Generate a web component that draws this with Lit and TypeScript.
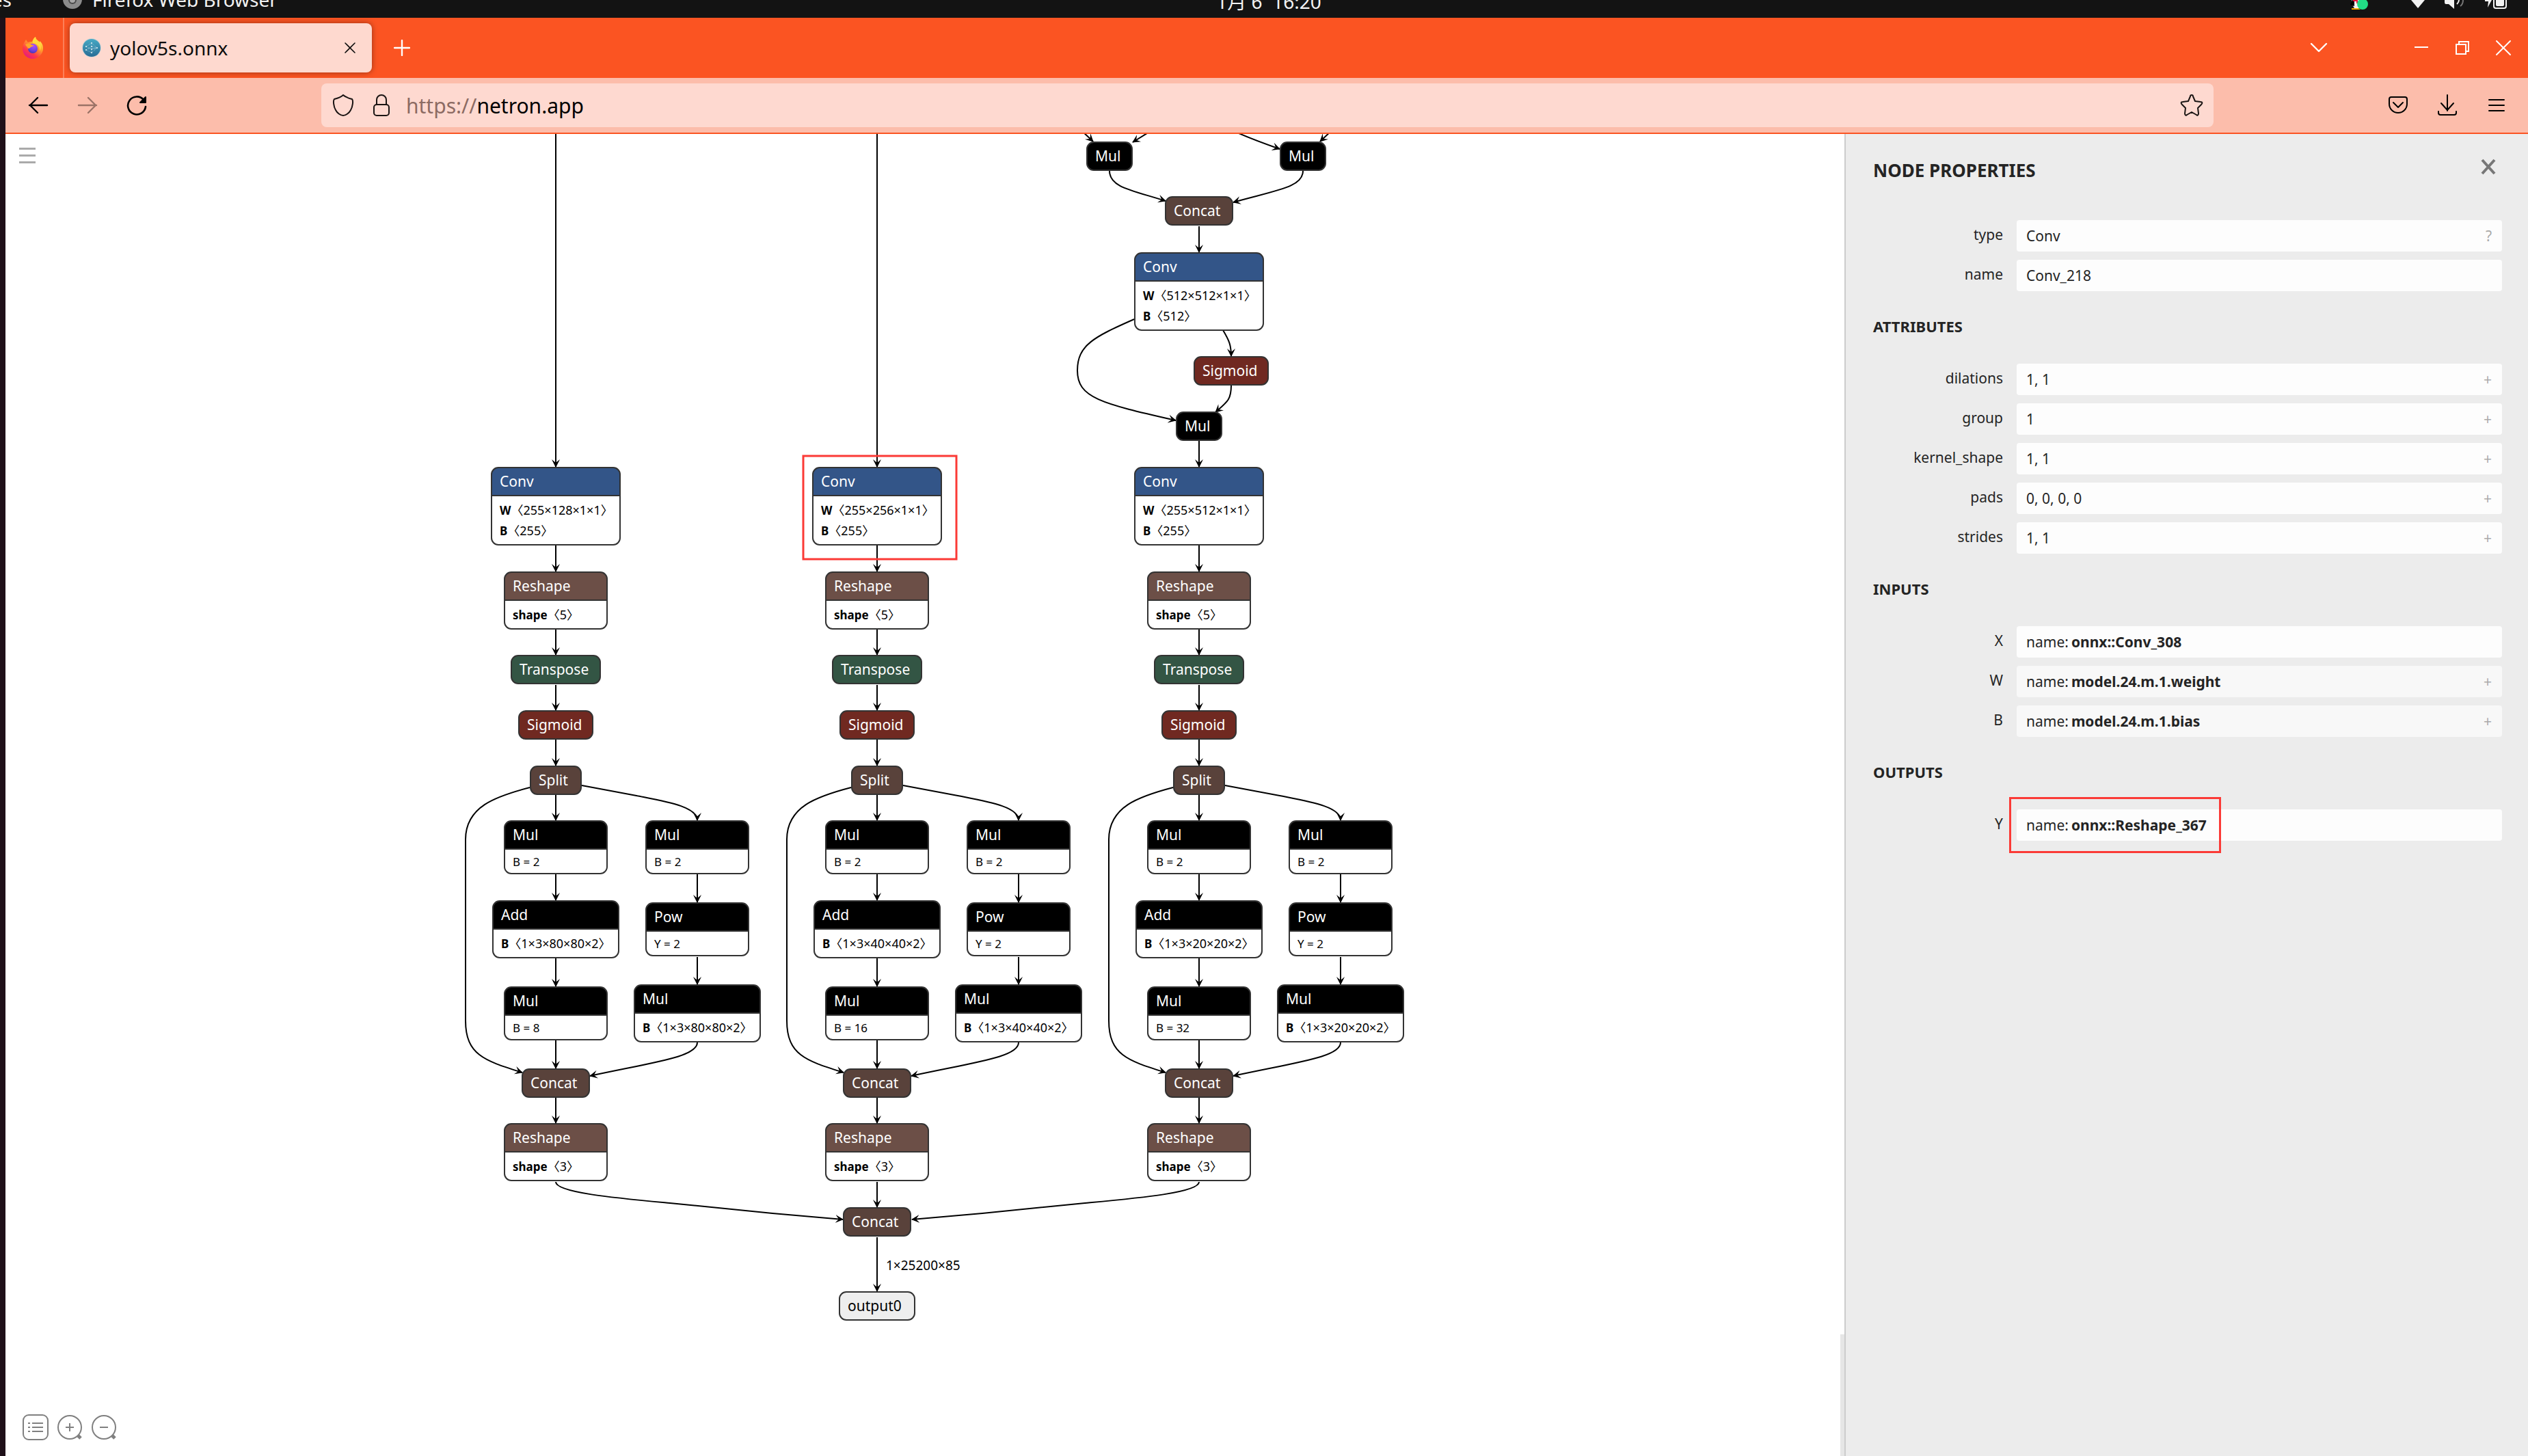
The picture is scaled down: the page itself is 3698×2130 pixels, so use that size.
import { LitElement, html, svg, css, nothing } from "lit";
import { customElement, property } from "lit/decorators.js";

/* ---------- graph data ---------- */

type Tone = "op" | "conv" | "shape" | "transform" | "activation" | "tensor" | "output";

interface Row {
  name: string;
  value: string;
  plain?: boolean;
}

interface GraphNode {
  label: string;
  tone: Tone;
  cx: number;
  y: number;
  w: number;
  rows?: Row[];
}

const tensor = (name: string, dims: string): Row => ({ name, value: `\u3008${dims}\u3009` });
const scalar = (name: string, value: string): Row => ({ name, value, plain: true });

/** One detection head: Conv down to the last Reshape of a column. */
function head(cx: number, channels: number, grid: number, stride: number): GraphNode[] {
  const cell = `1×3×${grid}×${grid}×2`;
  const right = cx + 207;
  return [
    { label: "Conv", tone: "conv", cx, y: 684, w: 188, rows: [tensor("W", `255×${channels}×1×1`), tensor("B", "255")] },
    { label: "Reshape", tone: "shape", cx, y: 837, w: 150, rows: [tensor("shape", "5")] },
    { label: "Transpose", tone: "transform", cx, y: 959, w: 130 },
    { label: "Sigmoid", tone: "activation", cx, y: 1040, w: 108 },
    { label: "Split", tone: "tensor", cx, y: 1121, w: 74 },
    { label: "Mul", tone: "op", cx, y: 1201, w: 150, rows: [scalar("B", "2")] },
    { label: "Add", tone: "op", cx, y: 1318, w: 184, rows: [tensor("B", cell)] },
    { label: "Mul", tone: "op", cx, y: 1444, w: 150, rows: [scalar("B", String(stride))] },
    { label: "Mul", tone: "op", cx: right, y: 1201, w: 150, rows: [scalar("B", "2")] },
    { label: "Pow", tone: "op", cx: right, y: 1321, w: 150, rows: [scalar("Y", "2")] },
    { label: "Mul", tone: "op", cx: right, y: 1441, w: 184, rows: [tensor("B", cell)] },
    { label: "Concat", tone: "tensor", cx, y: 1564, w: 98 },
    { label: "Reshape", tone: "shape", cx, y: 1644, w: 150, rows: [tensor("shape", "3")] },
  ];
}

const COLUMNS = [813, 1283, 1754];

const NODES: GraphNode[] = [
  { label: "Mul", tone: "op", cx: 1623, y: 208, w: 66 },
  { label: "Mul", tone: "op", cx: 1906, y: 208, w: 66 },
  { label: "Concat", tone: "tensor", cx: 1754, y: 288, w: 98 },
  { label: "Conv", tone: "conv", cx: 1754, y: 370, w: 188, rows: [tensor("W", "512×512×1×1"), tensor("B", "512")] },
  { label: "Sigmoid", tone: "activation", cx: 1801, y: 522, w: 108 },
  { label: "Mul", tone: "op", cx: 1754, y: 603, w: 66 },
  ...head(COLUMNS[0], 128, 80, 8),
  ...head(COLUMNS[1], 256, 40, 16),
  ...head(COLUMNS[2], 512, 20, 32),
  { label: "Concat", tone: "tensor", cx: 1283, y: 1767, w: 98 },
  { label: "output0", tone: "output", cx: 1283, y: 1890, w: 110 },
];

function columnEdges(cx: number): string[] {
  const r = cx + 207;
  return [
    `M${cx} 797V836`,
    `M${cx} 920V958`,
    `M${cx} 1002V1039`,
    `M${cx} 1082V1120`,
    `M${cx} 1163V1200`,
    `M${cx} 1279V1317`,
    `M${cx} 1402V1443`,
    `M${cx} 1522V1563`,
    `M${cx} 1606V1643`,
    `M${r} 1279V1320`,
    `M${r} 1400V1440`,
    `M${cx + 38} 1149L${cx + 118} 1164C${cx + 163} 1173 ${r} 1180 ${r} 1200`,
    `M${r} 1525C${r} 1546 ${cx + 148} 1553 ${cx + 50} 1574`,
    `M${cx - 38} 1152C${cx - 88} 1165 ${cx - 132} 1180 ${cx - 132} 1228V1493C${cx - 132} 1544 ${cx - 103} 1552 ${cx - 49} 1569`,
  ];
}

const EDGES: string[] = [
  "M813 190V683",
  "M1283 190V683",
  "M1754 331V369",
  "M1754 645V683",
  "M1581 190L1599 207",
  "M1686 190L1657 208",
  "M1801 190C1820 199 1838 206 1872 218",
  "M1949 190L1931 207",
  "M1623 250C1623 274 1655 278 1705 294",
  "M1906 250C1906 274 1868 278 1804 296",
  "M1789 483C1798 498 1801 505 1801 521",
  "M1801 564C1801 585 1795 588 1778 603",
  "M1659 467C1600 493 1576 505 1576 542C1576 582 1610 590 1720 615",
  ...COLUMNS.flatMap(columnEdges),
  "M813 1729C813 1745 905 1753 980 1760L1130 1775L1233 1784",
  "M1754 1729C1754 1745 1662 1753 1587 1760L1437 1775L1334 1784",
  "M1283 1729V1766",
  "M1283 1810V1889",
];

const HEADER = 41;
const RADIUS = 10;

@customElement("model-graph")
export class ModelGraph extends LitElement {
  static styles = css`
    :host {
      display: block;
      width: 100%;
      height: 100%;
    }
    .graph {
      display: block;
      width: 100%;
      height: 100%;
      font-family: "Noto Sans", "Noto Sans CJK SC", sans-serif;
    }
    .edge {
      fill: none;
      stroke: #000;
      stroke-width: 2;
    }
    .outline {
      fill: none;
      stroke: #333;
      stroke-width: 2;
    }
    .body {
      fill: #fff;
    }
    .rule {
      stroke: #333;
      stroke-width: 2;
    }
    .title {
      font-size: 21px;
      fill: #fff;
    }
    .attr {
      font-size: 17px;
      fill: #000;
    }
    .attr-name {
      font-weight: 700;
    }
    .attr-dims {
      font-size: 18px;
    }
    .edge-label {
      font-size: 19px;
      fill: #000;
    }
    .op {
      fill: #000;
    }
    .conv {
      fill: #335588;
    }
    .shape {
      fill: #6c4f47;
    }
    .transform {
      fill: #335544;
    }
    .activation {
      fill: #702921;
    }
    .tensor {
      fill: #59423b;
    }
    .output {
      fill: #eee;
    }
    .title.on-light {
      fill: #000;
    }
    .highlight {
      fill: none;
      stroke: #fb3a36;
      stroke-width: 3;
    }
  `;

  private node(n: GraphNode) {
    const x = n.cx - n.w / 2;
    const right = x + n.w;
    const rows = n.rows ?? [];
    const bodyHeight = rows.length === 0 ? 0 : rows[0].plain ? 36 : 12 + rows.length * 30;
    const h = HEADER + bodyHeight;
    const top = `M${x} ${n.y + HEADER}V${n.y + RADIUS}a${RADIUS} ${RADIUS} 0 0 1 ${RADIUS} -${RADIUS}H${right - RADIUS}a${RADIUS} ${RADIUS} 0 0 1 ${RADIUS} ${RADIUS}V${n.y + HEADER}Z`;
    return svg`
      <g>
        ${rows.length
          ? svg`
              <rect class="body" x=${x} y=${n.y} width=${n.w} height=${h} rx=${RADIUS}></rect>
              <path class=${n.tone} d=${top}></path>
              <line class="rule" x1=${x} x2=${right} y1=${n.y + HEADER} y2=${n.y + HEADER}></line>`
          : svg`<rect class=${n.tone} x=${x} y=${n.y} width=${n.w} height=${h} rx=${RADIUS}></rect>`}
        <rect class="outline" x=${x} y=${n.y} width=${n.w} height=${h} rx=${RADIUS}></rect>
        <text class="title ${n.tone === "output" ? "on-light" : ""}" x=${x + 12} y=${n.y + 28}>${n.label}</text>
        ${rows.map((r, i) =>
          r.plain
            ? svg`<text class="attr" x=${x + 12} y=${n.y + HEADER + 25}>${r.name} = ${r.value}</text>`
            : svg`<text class="attr" x=${x + 12} y=${n.y + HEADER + 28 + i * 30}><tspan class="attr-name">${r.name}</tspan><tspan class="attr-dims">${r.value}</tspan></text>`
        )}
      </g>`;
  }

  render() {
    return html`
      <svg class="graph" viewBox="8 196 2690 1934" preserveAspectRatio="xMidYMin meet" role="img" aria-label="Model graph">
        <defs>
          <marker id="arrow" viewBox="0 0 12 12" refX="11" refY="6" markerWidth="12" markerHeight="12" markerUnits="userSpaceOnUse" orient="auto">
            <path d="M0 0L12 6L0 12L5 6Z"></path>
          </marker>
        </defs>
        ${EDGES.map((d) => svg`<path class="edge" d=${d} marker-end="url(#arrow)"></path>`)}
        ${NODES.map((n) => this.node(n))}
        <text class="edge-label" x="1296" y="1858">1×25200×85</text>
        <rect class="highlight" x="1175" y="667" width="224" height="151"></rect>
      </svg>`;
  }
}

/* ---------- properties sidebar ---------- */

interface Property {
  label: string;
  value: string;
  prefix?: string;
  action?: string;
  muted?: boolean;
  marked?: boolean;
}

interface Section {
  title?: string;
  items: Property[];
}

const SECTIONS: Section[] = [
  {
    items: [
      { label: "type", value: "Conv", action: "?" },
      { label: "name", value: "Conv_218" },
    ],
  },
  {
    title: "ATTRIBUTES",
    items: [
      { label: "dilations", value: "1, 1", action: "+" },
      { label: "group", value: "1", action: "+" },
      { label: "kernel_shape", value: "1, 1", action: "+" },
      { label: "pads", value: "0, 0, 0, 0", action: "+" },
      { label: "strides", value: "1, 1", action: "+" },
    ],
  },
  {
    title: "INPUTS",
    items: [
      { label: "X", prefix: "name:", value: "onnx::Conv_308" },
      { label: "W", prefix: "name:", value: "model.24.m.1.weight", action: "+", muted: true },
      { label: "B", prefix: "name:", value: "model.24.m.1.bias", action: "+", muted: true },
    ],
  },
  {
    title: "OUTPUTS",
    items: [{ label: "Y", prefix: "name:", value: "onnx::Reshape_367", marked: true }],
  },
];

@customElement("node-properties")
export class NodeProperties extends LitElement {
  @property({ attribute: false }) sections: Section[] = SECTIONS;

  static styles = css`
    :host {
      display: block;
      box-sizing: border-box;
      background: #ececec;
      border-left: 2px solid #ccc;
      padding: 36px 38px 0 40px;
      color: #242424;
      font: 21px/30px "Noto Sans", sans-serif;
    }
    .top {
      display: flex;
      justify-content: space-between;
      align-items: flex-start;
      margin-bottom: 56px;
    }
    .heading {
      margin: 0;
      font-size: 26px;
      line-height: 34px;
      font-weight: 700;
    }
    .subheading {
      margin: 36px 0 40px;
      font-size: 22px;
      line-height: 30px;
      font-weight: 700;
    }
    .close {
      display: flex;
      margin: 0 8px 0 0;
      padding: 0;
      border: 0;
      background: none;
    }
    .rows {
      display: grid;
      gap: 12px;
    }
    .row {
      display: grid;
      grid-template-columns: 190px 1fr;
      column-gap: 20px;
      height: 46px;
    }
    .label {
      text-align: right;
      line-height: 42px;
    }
    .box {
      position: relative;
      display: flex;
      align-items: center;
      gap: 4px;
      padding: 0 15px 0 14px;
      border-radius: 4px;
      background: #fdfdfd;
    }
    .box.muted {
      background: #f8f8f8;
    }
    .field {
      flex: 1;
      min-width: 0;
      height: 46px;
      padding: 0;
      border: 0;
      outline: 0;
      background: none;
      color: inherit;
      font: inherit;
    }
    .field.strong {
      font-weight: 700;
    }
    .action {
      padding: 0;
      border: 0;
      background: none;
      color: #aaa;
      font: inherit;
    }
    .mark {
      position: absolute;
      left: -11px;
      top: -18px;
      width: 310px;
      height: 82px;
      box-sizing: border-box;
      border: 3px solid #fb3a36;
    }
  `;

  private row(p: Property, id: string) {
    return html`
      <div class="row">
        <label class="label" for=${id}>${p.label}</label>
        <div class="box ${p.muted ? "muted" : ""}">
          ${p.prefix ? html`<span>${p.prefix}</span>` : nothing}
          <input class="field ${p.prefix ? "strong" : ""}" id=${id} readonly .value=${p.value} />
          ${p.action ? html`<button class="action" type="button">${p.action}</button>` : nothing}
          ${p.marked ? html`<div class="mark"></div>` : nothing}
        </div>
      </div>`;
  }

  render() {
    return html`
      <div class="top">
        <h1 class="heading">NODE PROPERTIES</h1>
        <button class="close" type="button" aria-label="Close">
          <svg width="24" height="24" viewBox="0 0 24 24" fill="none" stroke="#777" stroke-width="4">
            <path d="M3 2L21 22M21 2L3 22"></path>
          </svg>
        </button>
      </div>
      ${this.sections.map(
        (s, i) => html`
          ${s.title ? html`<h2 class="subheading">${s.title}</h2>` : nothing}
          <div class="rows">${s.items.map((p, j) => this.row(p, `p${i}-${j}`))}</div>
        `
      )}`;
  }
}

/* ---------- icons ---------- */

const firefox = html`
  <svg width="32" height="32" viewBox="0 0 32 32" aria-hidden="true">
    <defs>
      <linearGradient id="ff-body" x1="0.85" y1="0.1" x2="0.25" y2="1">
        <stop offset="0" stop-color="#fff44f"></stop>
        <stop offset="0.35" stop-color="#ffa02a"></stop>
        <stop offset="0.7" stop-color="#ff3b47"></stop>
        <stop offset="1" stop-color="#e31587"></stop>
      </linearGradient>
      <radialGradient id="ff-globe" cx="0.6" cy="0.2" r="0.9">
        <stop offset="0" stop-color="#b04bff"></stop>
        <stop offset="0.6" stop-color="#7043dd"></stop>
        <stop offset="1" stop-color="#3a2ea8"></stop>
      </radialGradient>
    </defs>
    <path fill="url(#ff-body)" d="M3 9C4 7 5 6 6 4C7 6 8 7 9 8C11 7 13 7 15 7C16 4 18 1 20 0C20 3 22 4 24 6C25 6 25 7 26 8V6C30 9 31 13 31 17C31 25 24 32 16 32C7 32 1 25 1 17C1 14 2 11 3 9Z"></path>
    <circle cx="16" cy="17" r="7" fill="url(#ff-globe)"></circle>
    <path fill="#ffa52c" d="M5 11C8 9 11 9 13 11C14 12 16 12 17 12C17 14 14 14 13 15C12 16 11 17 9 17C8 14 6 14 5 11Z"></path>
    <path fill="#ffd93b" d="M16 6C17 3 18 1 20 0C20 3 22 4 24 6C28 10 29 15 26 21C27 15 24 10 16 9Z"></path>
  </svg>`;

const favicon = html`
  <svg width="28" height="28" viewBox="0 0 28 28" aria-hidden="true">
    <defs>
      <linearGradient id="globe" x1="0" y1="0" x2="0" y2="1">
        <stop offset="0" stop-color="#46a9c4"></stop>
        <stop offset="1" stop-color="#286d96"></stop>
      </linearGradient>
    </defs>
    <circle cx="14" cy="14" r="14" fill="#d8d5d5"></circle>
    <circle cx="14" cy="14" r="13" fill="url(#globe)"></circle>
    <g stroke="#a9d0dc" stroke-dasharray="1 1" fill="none" opacity="0.8">
      <path d="M6 12L14 7L22 14L14 21L6 17L14 12L22 14L14 16L6 12M14 7V12M14 16V21M9 15H20"></path>
    </g>
    <g fill="#e2f1f5">
      <circle cx="14" cy="7" r="1"></circle>
      <circle cx="6" cy="12" r="1"></circle>
      <circle cx="6" cy="17" r="1"></circle>
      <circle cx="14" cy="12" r="1"></circle>
      <circle cx="14" cy="16" r="1"></circle>
      <circle cx="14" cy="21" r="1"></circle>
      <circle cx="22" cy="14" r="1"></circle>
    </g>
  </svg>`;

const icon = (size: number, body: unknown, width = 2) => html`
  <svg
    width=${size}
    height=${size}
    viewBox="0 0 ${size} ${size}"
    fill="none"
    stroke="currentColor"
    stroke-width=${width}
    stroke-linecap="round"
    stroke-linejoin="round"
    aria-hidden="true"
  >${body}</svg>`;

const ICONS = {
  close: icon(20, svg`<path stroke-width="1.6" d="M3 3L17 17M17 3L3 17"></path>`),
  plus: icon(24, svg`<path stroke-width="2.4" d="M12 1V23M1 12H23"></path>`, 3),
  chevron: icon(28, svg`<path stroke-width="2.4" d="M3 8L14 19L25 8"></path>`, 3),
  minimize: icon(24, svg`<path stroke-linecap="butt" d="M2 11H22"></path>`),
  restore: icon(24, svg`<path stroke-linejoin="miter" d="M3 7H17V21H3ZM7 7V3H21V17H17"></path>`),
  quit: icon(24, svg`<path d="M2 2L22 22M22 2L2 22"></path>`),
  back: icon(32, svg`<path stroke-width="2.4" d="M3 16H29M15 5L4 16L15 27"></path>`, 3),
  forward: icon(32, svg`<path stroke-width="2.4" d="M3 16H29M17 5L28 16L17 27"></path>`, 3),
  reload: icon(32, svg`<path stroke-width="2.6" d="M29 18A13 13 0 1 1 26 8"></path><path fill="currentColor" stroke-width="2" d="M29 4V12H21Z"></path>`, 3),
  shield: icon(36, svg`<path d="M18 3C21 6 27 8 31 9C33 11 32 20 29 25C27 29 22 33 18 33C14 33 9 29 7 25C4 20 3 11 5 9C9 8 15 6 18 3Z"></path>`),
  lock: icon(36, svg`<rect x="7" y="17" width="22" height="16" rx="4"></rect><path d="M11 17V10A7 7 0 0 1 25 10V17"></path>`, 2),
  star: icon(36, svg`<path d="M18 3C19 3 20 4 20 5L23 12L31 13C34 13 34 15 32 17L27 22L28 30C28 33 26 33 25 32L18 28L11 32C10 33 8 33 8 30L9 22L4 17C2 15 2 13 5 13L13 12L16 5C16 4 17 3 18 3Z"></path>`, 2),
  pocket: icon(32, svg`<path d="M6 4H26Q29 4 29 7V14A13 13 0 0 1 3 14V7Q3 4 6 4Z"></path><path d="M9 12L16 19L23 12"></path>`),
  download: icon(32, svg`<path d="M16 1V24M7 13L16 23L25 13M3 25V27Q3 30 6 30H26Q29 30 29 27V25"></path>`),
  menu: icon(32, svg`<path d="M5 8H27M5 16H27M5 24H27"></path>`, 2),
};

/* ---------- browser window ---------- */

@customElement("app-root")
export class AppRoot extends LitElement {
  static styles = css`
    :host {
      display: flex;
      flex-direction: column;
      height: 100vh;
      overflow: hidden;
      background: #131313;
      color: #000;
      font-family: "Noto Sans", "Noto Sans CJK SC", sans-serif;
    }
    button {
      display: flex;
      align-items: center;
      justify-content: center;
      padding: 0;
      border: 0;
      background: none;
      color: inherit;
      font: inherit;
    }

    .desktop-bar {
      flex: none;
      display: grid;
      grid-template-columns: 1fr auto 1fr;
      grid-template-rows: 26px;
      align-items: end;
      height: 26px;
      overflow: hidden;
      color: #f2f2f2;
      font-size: 28px;
      white-space: pre;
    }
    .apps {
      display: flex;
      align-items: flex-end;
      line-height: 54px;
      height: 54px;
    }
    .activities {
      width: 92px;
      box-sizing: border-box;
      padding-right: 75px;
      direction: rtl;
    }
    .app-name {
      padding-left: 15px;
    }
    .clock {
      height: 48px;
      padding-left: 14px;
      line-height: 48px;
    }
    .tray {
      display: flex;
      justify-content: flex-end;
      gap: 28px;
      padding-right: 30px;
    }
    .tray-app {
      margin-right: 34px;
    }

    /* window */
    .window {
      flex: 1;
      min-height: 0;
      display: flex;
      flex-direction: column;
      border-left: 8px solid #1f1019;
      background: #fff;
    }
    .tabs {
      flex: none;
      display: flex;
      align-items: center;
      height: 88px;
      padding-right: 6px;
      box-sizing: border-box;
      background: #fb5422;
      color: #fff;
    }
    .brand {
      display: flex;
      align-items: center;
      align-self: stretch;
      width: 86px;
      padding-left: 24px;
      box-sizing: border-box;
      border-right: 2px solid #fc8058;
    }
    .tab {
      display: flex;
      align-items: center;
      gap: 13px;
      width: 442px;
      height: 72px;
      margin-left: 8px;
      padding: 0 12px 0 18px;
      box-sizing: border-box;
      border-radius: 8px;
      background: #fed9cf;
      box-shadow: 0 0 8px rgba(0, 0, 0, 0.4);
      color: #0c0c0c;
      font-size: 28px;
    }
    .tab-title {
      flex: 1;
    }
    .tab-close {
      width: 40px;
      height: 40px;
    }
    .new-tab {
      width: 56px;
      height: 56px;
      margin-left: 16px;
    }
    .tab-list {
      width: 60px;
      height: 60px;
      margin-left: auto;
      margin-right: 90px;
    }
    .window-button {
      width: 60px;
      height: 60px;
    }
    .nav {
      flex: none;
      display: flex;
      align-items: center;
      height: 80px;
      padding: 0 10px 0 12px;
      border-bottom: 2px solid #fb5422;
      background: #fcbdab;
    }
    .nav-button {
      width: 72px;
      height: 64px;
    }
    .disabled {
      color: #9b7367;
    }
    .address {
      flex: 1;
      display: flex;
      align-items: center;
      height: 64px;
      margin: 0 234px;
      padding: 0 4px;
      border-radius: 8px;
      background: #fed9d0;
      font-size: 30px;
    }
    .address-button {
      width: 56px;
      height: 56px;
      color: #1a1413;
    }
    .scheme {
      margin-left: 8px;
      color: #8c6b63;
    }
    .url {
      flex: 1;
      min-width: 0;
      padding: 0;
      border: 0;
      outline: 0;
      background: none;
      color: #000;
      font: inherit;
    }

    /* page */
    .page {
      flex: 1;
      min-height: 0;
      display: flex;
    }
    .canvas {
      position: relative;
      flex: 1;
      min-width: 0;
      overflow: hidden;
    }
    .page-menu {
      position: absolute;
      left: 20px;
      top: 18px;
    }
    .zoom-tools {
      position: absolute;
      left: 24px;
      bottom: 21px;
      display: flex;
      gap: 10px;
      color: #808080;
    }
    .scroll-thumb {
      position: absolute;
      right: 0;
      bottom: 0;
      width: 6px;
      height: 178px;
      background: #e6e6e6;
    }
    .sidebar {
      flex: 0 0 1000px;
    }
  `;

  render() {
    return html`
      <header class="desktop-bar">
        <div class="apps">
          <span class="activities">es</span>
          <svg width="28" height="26" viewBox="0 0 28 26" aria-hidden="true">
            <circle cx="14" cy="-1" r="14" fill="#8c8c8c"></circle>
            <circle cx="14" cy="0" r="6" fill="#4a4a4a"></circle>
            <circle cx="14" cy="0" r="4" fill="#a8a8a8"></circle>
          </svg>
          <span class="app-name">Firefox Web Browser</span>
        </div>
        <time class="clock">1月 6  16:20</time>
        <div class="tray">
          <svg class="tray-app" width="26" height="26" viewBox="0 0 26 26" aria-hidden="true">
            <path d="M2 0H14V12H6C3 8 2 4 2 0Z" fill="#f2f2f2"></path>
            <path d="M0 7L3 0H6V9Z" fill="#000"></path>
            <path d="M4 0H11V5H9V2H4Z" fill="#e6143c"></path>
            <path d="M2 12H12L15 14H2Z" fill="#f0a800"></path>
            <circle cx="18" cy="6" r="8" fill="#22dc86"></circle>
          </svg>
          <svg width="22" height="26" viewBox="0 0 22 26" aria-hidden="true">
            <path d="M1 0H21L11 12Z" fill="#f2f2f2"></path>
          </svg>
          <svg width="30" height="26" viewBox="0 0 30 26" aria-hidden="true">
            <path d="M0 0H14V13L6 6H2Q0 6 0 3Z" fill="#f2f2f2"></path>
            <path d="M21 0Q21 3 18 6" fill="none" stroke="#f2f2f2" stroke-width="2"></path>
            <path d="M27 0Q27 6 23 9" fill="none" stroke="#777" stroke-width="2"></path>
          </svg>
          <svg width="34" height="26" viewBox="0 0 34 26" aria-hidden="true">
            <path d="M1 0H11L5 11L6 2H1Z" fill="#f2f2f2"></path>
            <path d="M14 -4V9Q14 12 17 12H29Q32 12 32 9V-4" fill="none" stroke="#f2f2f2" stroke-width="2"></path>
            <rect x="17" y="-4" width="12" height="13" rx="2" fill="#f2f2f2"></rect>
          </svg>
        </div>
      </header>

      <div class="window">
        <div class="tabs">
          <div class="brand">${firefox}</div>
          <div class="tab">
            ${favicon}
            <span class="tab-title">yolov5s.onnx</span>
            <button class="tab-close" type="button" aria-label="Close tab">${ICONS.close}</button>
          </div>
          <button class="new-tab" type="button" aria-label="New tab">${ICONS.plus}</button>
          <button class="tab-list" type="button" aria-label="List all tabs">${ICONS.chevron}</button>
          <button class="window-button" type="button" aria-label="Minimize">${ICONS.minimize}</button>
          <button class="window-button" type="button" aria-label="Restore">${ICONS.restore}</button>
          <button class="window-button" type="button" aria-label="Close window">${ICONS.quit}</button>
        </div>

        <nav class="nav">
          <button class="nav-button" type="button" aria-label="Back">${ICONS.back}</button>
          <button class="nav-button disabled" type="button" aria-label="Forward">${ICONS.forward}</button>
          <button class="nav-button" type="button" aria-label="Reload">${ICONS.reload}</button>
          <div class="address">
            <button class="address-button" type="button" aria-label="Tracking protection">${ICONS.shield}</button>
            <button class="address-button" type="button" aria-label="Connection">${ICONS.lock}</button>
            <label class="scheme" for="url">https://</label>
            <input class="url" id="url" .value=${"netron.app"} />
            <button class="address-button" type="button" aria-label="Bookmark">${ICONS.star}</button>
          </div>
          <button class="nav-button" type="button" aria-label="Pocket">${ICONS.pocket}</button>
          <button class="nav-button" type="button" aria-label="Downloads">${ICONS.download}</button>
          <button class="nav-button" type="button" aria-label="Menu">${ICONS.menu}</button>
        </nav>

        <div class="page">
          <main class="canvas">
            <model-graph></model-graph>
            <button class="page-menu" type="button" aria-label="Application menu">
              <svg width="24" height="26" viewBox="0 0 24 26" fill="#aaa" aria-hidden="true">
                <path d="M0 2H24V5H0ZM0 12H24V15H0ZM0 22H24V25H0Z"></path>
              </svg>
            </button>
            <div class="zoom-tools">
              <button type="button" aria-label="Model properties">
                <svg width="40" height="40" viewBox="0 0 40 40" fill="none" stroke="currentColor" stroke-width="2" aria-hidden="true">
                  <rect x="2" y="1" width="36" height="36" rx="8"></rect>
                  <path d="M9 13H12M15 13H31M9 19H12M15 19H31M9 25H12M15 25H31"></path>
                </svg>
              </button>
              <button type="button" aria-label="Zoom in">
                <svg width="40" height="40" viewBox="0 0 40 40" fill="none" stroke="currentColor" stroke-width="2" aria-hidden="true">
                  <circle cx="20" cy="19" r="17"></circle>
                  <path d="M14 19H26M20 13V25"></path>
                  <path stroke-width="5" d="M32 31L36 35"></path>
                </svg>
              </button>
              <button type="button" aria-label="Zoom out">
                <svg width="40" height="40" viewBox="0 0 40 40" fill="none" stroke="currentColor" stroke-width="2" aria-hidden="true">
                  <circle cx="20" cy="19" r="17"></circle>
                  <path d="M14 19H26"></path>
                  <path stroke-width="5" d="M32 31L36 35"></path>
                </svg>
              </button>
            </div>
            <div class="scroll-thumb"></div>
          </main>
          <node-properties class="sidebar"></node-properties>
        </div>
      </div>`;
  }
}
